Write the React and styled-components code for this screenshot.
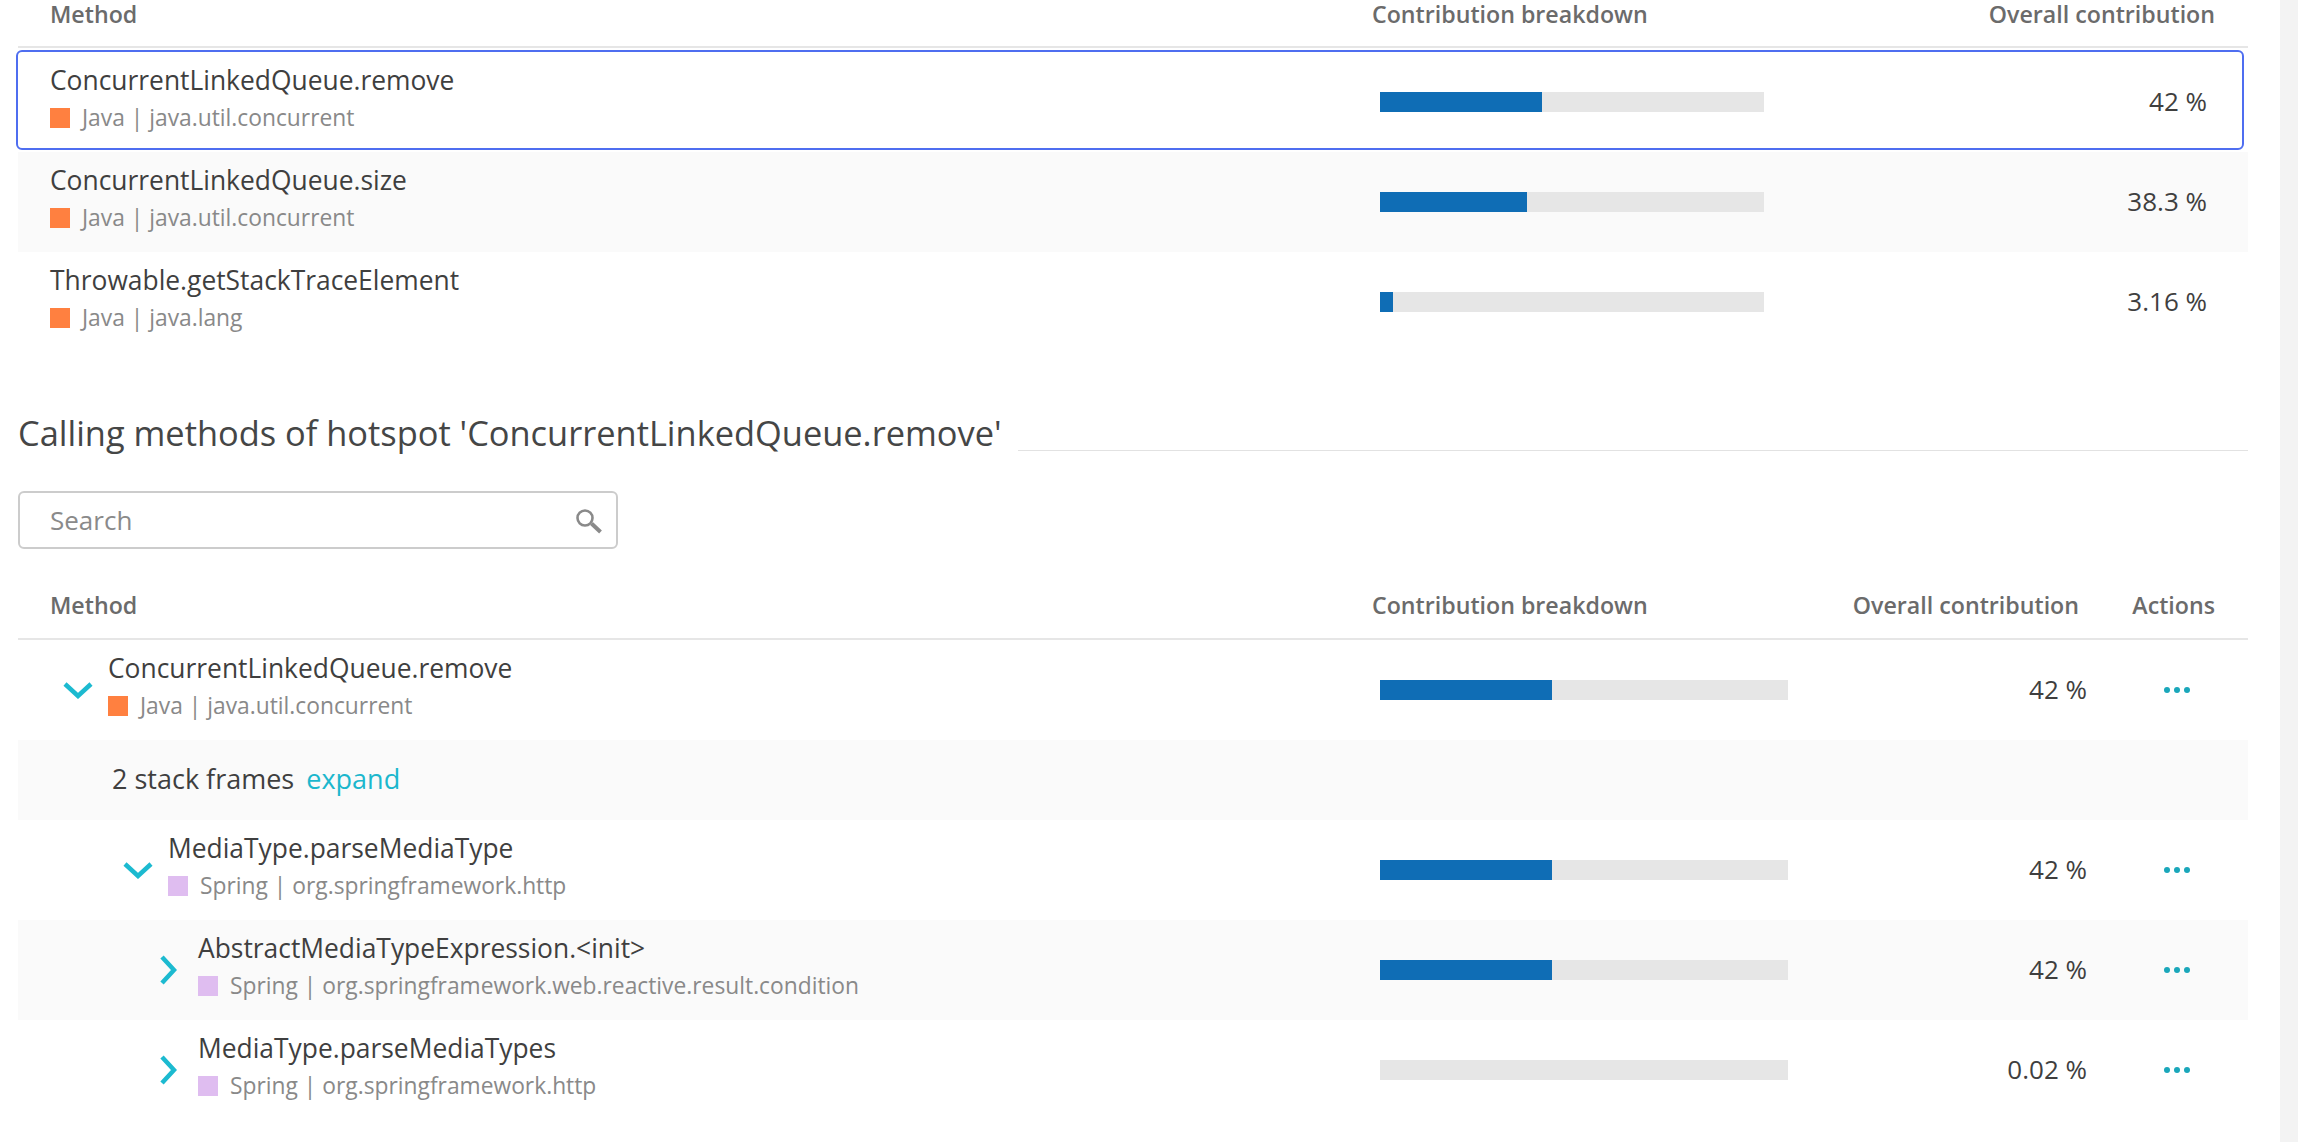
import React from 'react';
import styled, { createGlobalStyle } from 'styled-components';

const GlobalStyle = createGlobalStyle`
    html, body {
        margin: 0;
        padding: 0;
        background: #ffffff;
        overflow: hidden;
    }
    body {
        font-family: "Open Sans", "Liberation Sans", sans-serif;
        color: #454646;
    }
`;

const hotspots = [
    { name: 'ConcurrentLinkedQueue.remove', tech: 'Java', pkg: 'java.util.concurrent', value: 42, label: '42 %', focused: true },
    { name: 'ConcurrentLinkedQueue.size', tech: 'Java', pkg: 'java.util.concurrent', value: 38.3, label: '38.3 %' },
    { name: 'Throwable.getStackTraceElement', tech: 'Java', pkg: 'java.lang', value: 3.16, label: '3.16 %' },
];

const callers = [
    { name: 'ConcurrentLinkedQueue.remove', tech: 'Java', pkg: 'java.util.concurrent', value: 42, label: '42 %', indent: 45, open: true },
    { frames: 2 },
    { name: 'MediaType.parseMediaType', tech: 'Spring', pkg: 'org.springframework.http', value: 42, label: '42 %', indent: 105, open: true },
    { name: 'AbstractMediaTypeExpression.<init>', tech: 'Spring', pkg: 'org.springframework.web.reactive.result.condition', value: 42, label: '42 %', indent: 135, shaded: true },
    { name: 'MediaType.parseMediaTypes', tech: 'Spring', pkg: 'org.springframework.http', value: 0.02, label: '0.02 %', indent: 135 },
];

const App = () => {
    return (
        <Page>
            <GlobalStyle />
            <Content>
                <TopHeader>
                    <HeaderCell>Method</HeaderCell>
                    <HeaderCell>Contribution breakdown</HeaderCell>
                    <HeaderCell $right>Overall contribution</HeaderCell>
                </TopHeader>
                {hotspots.map((row, i) => (
                    <TopRow key={row.name} $shaded={i === 1} $focused={row.focused}>
                        <MethodInfo row={row} $left={32} />
                        <Bar $width={384} value={row.value} />
                        <Value $pad={41}>{row.label}</Value>
                    </TopRow>
                ))}

                <HeadingRow>
                    <Heading>Calling methods of hotspot 'ConcurrentLinkedQueue.remove'</Heading>
                    <HeadingLine />
                </HeadingRow>

                <SearchBox>
                    <SearchInput placeholder="Search" />
                    <SearchIcon />
                </SearchBox>

                <TreeHeader>
                    <HeaderCell>Method</HeaderCell>
                    <HeaderCell>Contribution breakdown</HeaderCell>
                    <HeaderCell $right $pad={8}>Overall contribution</HeaderCell>
                    <HeaderCell $right>Actions</HeaderCell>
                </TreeHeader>
                {callers.map((row, i) => row.frames ? (
                    <FramesRow key={i}>
                        {row.frames} stack frames <Expand>expand</Expand>
                    </FramesRow>
                ) : (
                    <TreeRow key={row.name} $shaded={row.shaded}>
                        <TreeCell $indent={row.indent}>
                            <Toggle open={row.open} />
                            <MethodInfo row={row} />
                        </TreeCell>
                        <Bar $width={408} value={row.value} />
                        <Value $pad={0}>{row.label}</Value>
                        <ActionDots>
                            <i /><i /><i />
                        </ActionDots>
                    </TreeRow>
                ))}
            </Content>
            <ScrollTrack />
        </Page>
    );
};

const MethodInfo = ({ row, $left }) => (
    <Method $left={$left}>
        <MethodName>{row.name}</MethodName>
        <MethodSub>
            <TechSquare $tech={row.tech} />
            {row.tech} | {row.pkg}
        </MethodSub>
    </Method>
);

const Bar = ({ $width, value }) => (
    <BarCell>
        <BarTrack $width={$width}>
            <BarFill style={{ width: Math.round($width * value / 100 + 0.4) }} />
        </BarTrack>
    </BarCell>
);

const Toggle = ({ open }) => (
    <ToggleBox>
        {open ? (
            <svg width="30" height="18" viewBox="0 0 30 18">
                <path d="M2 3 L15 15 L28 3" fill="none" stroke="#1cbad0" strokeWidth="4.5" />
            </svg>
        ) : (
            <svg width="18" height="30" viewBox="0 0 18 30">
                <path d="M3 2 L15 15 L3 28" fill="none" stroke="#1cbad0" strokeWidth="4.5" />
            </svg>
        )}
    </ToggleBox>
);

const SearchIcon = () => (
    <SearchGlyph width="28" height="28" viewBox="0 0 28 28">
        <circle cx="10" cy="10" r="7.5" fill="none" stroke="#8a8a8a" strokeWidth="2.6" />
        <path d="M16.5 15.5 L25.5 24" fill="none" stroke="#8a8a8a" strokeWidth="4" />
    </SearchGlyph>
);

const Page = styled.div`
    display: flex;
    width: 2298px;
    height: 1142px;
    overflow: hidden;
    background: #ffffff;
`;

const Content = styled.div`
    width: 2230px;
    margin-left: 18px;
    margin-right: 32px;
`;

const ScrollTrack = styled.div`
    width: 18px;
    background: #f3f3f3;
`;

const HeaderCell = styled.div`
    font-size: 23.2px;
    line-height: 28px;
    font-weight: 600;
    color: #6b6b6b;
    white-space: nowrap;
    text-align: ${p => (p.$right ? 'right' : 'left')};
    padding-right: ${p => (p.$pad !== undefined ? p.$pad : p.$right ? 33 : 0)}px;
    &:first-child {
        padding-left: 32px;
    }
`;

const TopHeader = styled.div`
    display: grid;
    grid-template-columns: 1354px 400px 1fr;
    height: 46px;
    border-bottom: 2px solid #e6e6e6;
    margin-bottom: 4px;
`;

const TopRow = styled.div`
    position: relative;
    display: grid;
    grid-template-columns: 1354px 400px 1fr;
    align-items: center;
    height: 100px;
    background: ${p => (p.$shaded ? '#fafafa' : '#ffffff')};
    ${p => p.$focused && `
        &::after {
            content: '';
            position: absolute;
            top: -2px;
            bottom: 2px;
            left: -2px;
            right: 4px;
            border: 2px solid #4f6ef0;
            border-radius: 6px;
        }
    `}
`;

const Method = styled.div`
    padding-left: ${p => p.$left || 0}px;
    padding-bottom: 6px;
`;

const MethodName = styled.div`
    font-size: 26.4px;
    line-height: 38px;
    color: #3f3f3f;
    white-space: nowrap;
`;

const MethodSub = styled.div`
    display: flex;
    align-items: center;
    font-size: 22.8px;
    line-height: 38px;
    color: #898989;
    white-space: pre;
`;

const TechSquare = styled.span`
    width: 20px;
    height: 20px;
    margin-right: 12px;
    background: ${p => (p.$tech === 'Java' ? '#ff8040' : '#dfbdf0')};
`;

const BarCell = styled.div`
    padding-left: 8px;
`;

const BarTrack = styled.div`
    width: ${p => p.$width}px;
    height: 20px;
    background: #e6e6e6;
`;

const BarFill = styled.div`
    height: 100%;
    background: #0f6db5;
`;

const Value = styled.div`
    font-size: 26px;
    line-height: 36px;
    padding-bottom: 2px;
    color: #3f3f3f;
    text-align: right;
    padding-right: ${p => p.$pad}px;
`;

const HeadingRow = styled.div`
    display: flex;
    align-items: flex-end;
    gap: 16px;
    height: 44px;
    margin-top: 59px;
`;

const Heading = styled.h2`
    margin: 0;
    font-size: 34.4px;
    line-height: 44px;
    font-weight: 400;
    color: #454646;
    white-space: nowrap;
`;

const HeadingLine = styled.div`
    flex: 1;
    height: 1px;
    margin-bottom: 4px;
    background: #e2e2e2;
`;

const SearchBox = styled.div`
    position: relative;
    width: 600px;
    height: 58px;
    margin-top: 36px;
    box-sizing: border-box;
    border: 2px solid #cccccc;
    border-radius: 6px;
`;

const SearchInput = styled.input`
    width: 100%;
    height: 100%;
    box-sizing: border-box;
    padding: 0 60px 0 30px;
    border: 0;
    outline: 0;
    background: transparent;
    font-family: inherit;
    font-size: 26px;
    color: #454646;
    &::placeholder {
        color: #8a8a8a;
        opacity: 1;
    }
`;

const SearchGlyph = styled.svg`
    position: absolute;
    top: 15px;
    right: 13px;
`;

const TreeHeader = styled.div`
    display: grid;
    grid-template-columns: 1354px 424px 291px 161px;
    box-sizing: border-box;
    height: 49px;
    margin-top: 42px;
    border-bottom: 2px solid #e6e6e6;
`;

const TreeRow = styled.div`
    display: grid;
    grid-template-columns: 1354px 424px 291px 161px;
    align-items: center;
    height: 100px;
    background: ${p => (p.$shaded ? '#fafafa' : '#ffffff')};
`;

const TreeCell = styled.div`
    display: flex;
    align-items: center;
    gap: 15px;
    padding-left: ${p => p.$indent}px;
`;

const ToggleBox = styled.span`
    display: flex;
    align-items: center;
    justify-content: center;
    width: 30px;
    flex: none;
`;

const ActionDots = styled.div`
    display: flex;
    gap: 4px;
    padding-left: 77px;
    i {
        width: 6px;
        height: 6px;
        border-radius: 50%;
        background: #1aa7ba;
    }
`;

const FramesRow = styled.div`
    display: flex;
    align-items: center;
    white-space: pre;
    box-sizing: border-box;
    height: 80px;
    padding: 0 0 4px 94px;
    background: #fafafa;
    font-size: 27px;
    color: #3f3f3f;
`;

const Expand = styled.span`
    margin-left: 5px;
    color: #1cb7cd;
    cursor: pointer;
`;

export default App;
